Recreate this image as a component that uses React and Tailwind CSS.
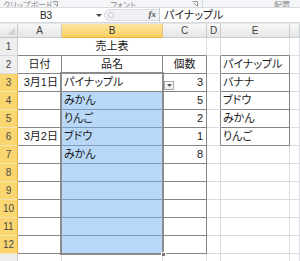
import React from "react";

const COLS = [
  { key: "A", w: 44 },
  { key: "B", w: 101 },
  { key: "C", w: 44 },
  { key: "D", w: 14 },
  { key: "E", w: 69 },
  { key: "F", w: 10 },
];

const DATA = {
  A: { 2: "日付", 3: "3月1日", 6: "3月2日" },
  B: { 2: "品名", 3: "パイナップル", 4: "みかん", 5: "りんご", 6: "ブドウ", 7: "みかん" },
  C: { 2: "個数", 3: "3", 4: "5", 5: "2", 6: "1", 7: "8" },
  E: { 2: "パイナップル", 3: "バナナ", 4: "ブドウ", 5: "みかん", 6: "りんご" },
};

const ROWS = [1, 2, 3, 4, 5, 6, 7, 8, 9, 10, 11, 12, 13];

const bordered = (c, r) => {
  if (["A", "B", "C"].includes(c) && r >= 2 && r <= 12) return true;
  if (c === "E" && r >= 2 && r <= 6) return true;
  return false;
};

const nextCol = (c) => {
  const i = COLS.findIndex((x) => x.key === c);
  return COLS[i + 1] ? COLS[i + 1].key : null;
};

const Launcher = () => (
  <svg width="6" height="6" viewBox="0 0 6 6" className="shrink-0">
    <path d="M0.5 0.5 H5.5 V5.5" fill="none" stroke="#9a9a9a" strokeWidth="1" />
    <path d="M2 2 L5 5" stroke="#9a9a9a" strokeWidth="1" />
  </svg>
);

const Ribbon = () => (
  <div className="h-[8px] flex bg-[#f4f5f7] border-b border-[#d8dbe0] overflow-hidden text-[8px] leading-[8px] text-[#8a8a8a]">
    <div className="w-[51px] flex items-end justify-between pl-[3px] pr-[4px] border-r border-[#d5d8dd]">
      <span className="translate-y-[3px] whitespace-nowrap">クリップボード</span>
      <Launcher />
    </div>
    <div className="w-[152px] flex items-end justify-between pl-[59px] pr-[4px] border-r border-[#d5d8dd]">
      <span className="translate-y-[3px] whitespace-nowrap">フォント</span>
      <Launcher />
    </div>
    <div className="flex-1 flex items-end justify-end pr-[10px]">
      <span className="translate-y-[3px] whitespace-nowrap">配置</span>
    </div>
  </div>
);

const FormulaBar = () => (
  <div className="h-[15px] flex bg-white border-b border-[#d4d7dc]">
    <div className="w-[104px] flex items-center relative">
      <span className="flex-1 text-center text-[10px] text-[#222] pr-[12px]">B3</span>
      <svg width="6" height="4" viewBox="0 0 6 4" className="absolute left-[96px] top-[6px]">
        <path d="M0 0 H6 L3 3 Z" fill="#444" />
      </svg>
    </div>
    <div className="w-[55px] flex items-center bg-[#eef0f3] rounded-l-full border border-r-0 border-[#d9dce1] my-[1px]">
      <span className="ml-[3px] w-[6px] h-[6px] rounded-full border border-[#c4c8ce] bg-[#f7f8fa]" />
      <span className="ml-auto mr-[3px] text-[9px] italic font-bold text-[#555] [font-family:'Liberation_Serif',serif]">fx</span>
    </div>
    <div className="flex-1 flex items-center pl-[4px] border-l border-[#c9ccd1] text-[11px] text-[#222] [font-feature-settings:'palt']">
      パイナップル
    </div>
  </div>
);

const Corner = () => (
  <div className="bg-gradient-to-b from-[#f7f7f7] to-[#e6e6e6] border-r border-b border-[#c3c6cb] flex items-end justify-end p-[2px]">
    <svg width="8" height="8" viewBox="0 0 8 8">
      <path d="M8 0 V8 H0 Z" fill="#d2d4d7" />
    </svg>
  </div>
);

const ColHeader = ({ label }) => {
  const sel = label === "B";
  return (
    <div
      className={
        sel
          ? "bg-gradient-to-b from-[#fde6a0] to-[#f8cf5e] border-r border-b border-r-[#e7c07a] border-b-[#f0ae35] flex items-center justify-center text-[10px] text-[#333]"
          : "bg-gradient-to-b from-[#f7f7f7] to-[#e6e6e6] border-r border-b border-[#c9ccd0] flex items-center justify-center text-[10px] text-[#444]"
      }
    >
      {label === "F" ? "" : label}
    </div>
  );
};

const RowHeader = ({ r }) => {
  const sel = r >= 3 && r <= 12;
  return (
    <div
      className={
        sel
          ? "bg-[#f9d670] border-r border-b border-r-[#f0ae35] border-b-[#f6e4b0] flex items-center justify-center text-[10px] text-[#4a4a4a]"
          : "bg-[#eeeeee] border-r border-b border-r-[#c9ccd0] border-b-[#d6d8db] flex items-center justify-center text-[10px] text-[#444]"
      }
    >
      {r < 13 ? r : ""}
    </div>
  );
};

const Cell = ({ c, r }) => {
  const text = DATA[c] && DATA[c][r];
  const nc = nextCol(c);
  const darkR = bordered(c, r) || (nc && bordered(nc, r));
  const darkB = bordered(c, r) || bordered(c, r + 1);
  const inSel = c === "B" && r >= 4 && r <= 12;
  const header = r === 2 && c !== "E";
  const right = (c === "A" || c === "C") && r >= 3;

  const rCls = darkR ? "border-r-[#858585]" : "border-r-[#dadcdf]";
  const bCls = inSel && r < 12 ? "border-b-[#7e9cbd]" : darkB ? "border-b-[#858585]" : "border-b-[#dadcdf]";
  const bg = inSel ? "bg-[#b9d8f8]" : "bg-white";
  const align = header ? "justify-center" : right ? "justify-end pr-[3px]" : "justify-start pl-[2px]";

  return (
    <div className={`relative flex items-center border-r border-b overflow-visible whitespace-nowrap text-[11px] text-[#1a1a1a] ${rCls} ${bCls} ${bg} ${align}`}>
      {text}
      {c === "C" && r === 3 && (
        <div className="absolute left-[1px] bottom-[1px] w-[10px] h-[9px] border border-[#a9a9a9] bg-gradient-to-b from-white to-[#ececec] flex items-center justify-center">
          <svg width="5" height="3" viewBox="0 0 5 3">
            <path d="M0 0 H5 L2.5 3 Z" fill="#555" />
          </svg>
        </div>
      )}
    </div>
  );
};

export default function App() {
  return (
    <div className="w-[300px] h-[261px] overflow-hidden bg-white [font-family:'Liberation_Sans','Noto_Sans_CJK_JP',sans-serif] [font-feature-settings:'palt']">
      <Ribbon />
      <FormulaBar />
      <div className="h-[1px] bg-[#e3e5e8]" />
      <div className="relative grid grid-cols-[18px_44px_101px_44px_14px_69px_10px] grid-rows-[14px_repeat(13,18px)]">
        <Corner />
        {COLS.map((c) => (
          <ColHeader key={c.key} label={c.key} />
        ))}
        {ROWS.map((r) => (
          <React.Fragment key={r}>
            <RowHeader r={r} />
            {r === 1 ? (
              <>
                <div className="col-span-3 flex items-center justify-center border-r border-b border-r-[#dadcdf] border-b-[#858585] text-[11px] text-[#1a1a1a]">
                  売上表
                </div>
                <Cell c="D" r={1} />
                <Cell c="E" r={1} />
                <Cell c="F" r={1} />
              </>
            ) : (
              COLS.map((c) => <Cell key={c.key} c={c.key} r={r} />)
            )}
          </React.Fragment>
        ))}
        <div className="absolute left-[60px] top-[48px] w-[104px] h-[183px] border-2 border-[#8c8c8c] pointer-events-none">
          <div className="absolute -right-[4px] -bottom-[4px] w-[5px] h-[5px] bg-[#7a7a7a] border border-white" />
        </div>
      </div>
    </div>
  );
}
